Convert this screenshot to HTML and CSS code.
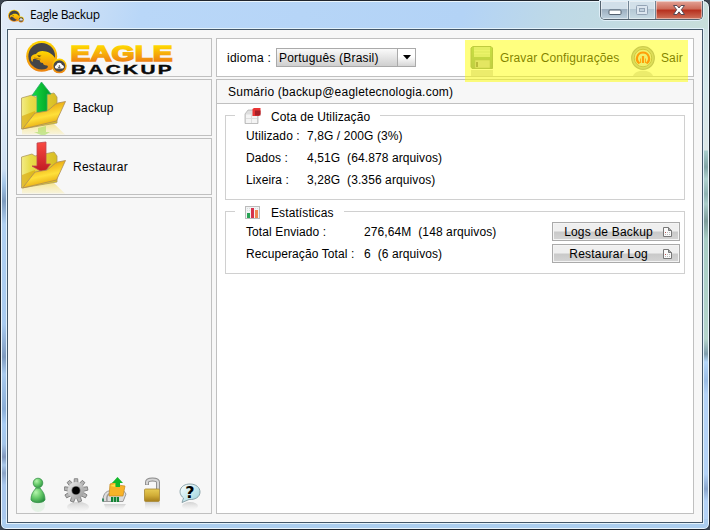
FILE: index.html
```html
<!DOCTYPE html>
<html lang="pt-BR">
<head>
<meta charset="utf-8">
<title>Eagle Backup</title>
<link rel="stylesheet" href="styles.css">
</head>
<body>
<svg class="defs" width="0" height="0" aria-hidden="true">
  <defs>
    <linearGradient id="gold" x1="0" y1="0" x2="0" y2="1"><stop offset="0" stop-color="#ffd800"/><stop offset="1" stop-color="#ee8410"/></linearGradient>
    <linearGradient id="goldText" gradientUnits="userSpaceOnUse" x1="0" y1="6" x2="0" y2="22"><stop offset="0" stop-color="#ffdc00"/><stop offset="1" stop-color="#ef8512"/></linearGradient>
    <linearGradient id="back" x1="0" y1="0" x2="1" y2="0"><stop offset="0" stop-color="#f3eb86"/><stop offset=".25" stop-color="#e8dc49"/><stop offset="1" stop-color="#d9bd22"/></linearGradient>
    <linearGradient id="front" x1="0" y1="0" x2=".35" y2="1"><stop offset="0" stop-color="#dc9a05"/><stop offset=".35" stop-color="#eeb51a"/><stop offset=".65" stop-color="#ffe03a"/><stop offset="1" stop-color="#e5a50c"/></linearGradient>
    <linearGradient id="fade" x1="0" y1="0" x2="0" y2="1"><stop offset="0" stop-color="#f4dc58" stop-opacity=".75"/><stop offset="1" stop-color="#f9edb0" stop-opacity=".4"/></linearGradient>
    <linearGradient id="up" x1="0" y1="0" x2="1" y2="0"><stop offset="0" stop-color="#15dc42"/><stop offset="1" stop-color="#009e26"/></linearGradient>
    <linearGradient id="down" x1="0" y1="0" x2="0" y2="1"><stop offset="0" stop-color="#fa4a42"/><stop offset="1" stop-color="#bd1720"/></linearGradient>
    <radialGradient id="person" cx=".35" cy=".3" r=".8"><stop offset="0" stop-color="#b4f5ac"/><stop offset=".5" stop-color="#66c969"/><stop offset="1" stop-color="#248b3c"/></radialGradient>
    <linearGradient id="shade" x1="0" y1="0" x2="0" y2="1"><stop offset="0" stop-color="#9a9a9a" stop-opacity=".4"/><stop offset="1" stop-color="#ccc" stop-opacity="0"/></linearGradient>
    <linearGradient id="steel" x1="0" y1="0" x2="1" y2="1"><stop offset="0" stop-color="#eee"/><stop offset="1" stop-color="#959595"/></linearGradient>
    <linearGradient id="brass" x1="0" y1="0" x2="0" y2="1"><stop offset="0" stop-color="#e8cc55"/><stop offset=".5" stop-color="#d2ae38"/><stop offset="1" stop-color="#a57d1a"/></linearGradient>
    <linearGradient id="bubble" x1="0" y1="0" x2="1" y2="1"><stop offset="0" stop-color="#fff"/><stop offset=".55" stop-color="#c4e7ed"/><stop offset="1" stop-color="#98cdd6"/></linearGradient>
    <linearGradient id="disk" x1="0" y1="0" x2="0" y2="1"><stop offset="0" stop-color="#8fbf86"/><stop offset="1" stop-color="#819d84"/></linearGradient>
    <symbol id="eagle" viewBox="0 0 41 33">
      <circle cx="15.700" cy="15.700" r="15.500" fill="url(#gold)"/>
      <circle cx="15.700" cy="15.700" r="13.300" fill="#444448"/>
      <path d="M5 18.500 C4.500 15.500 7 14 10 13.500 C12 10.500 16 9.800 20 11 C25 12.500 28 15 31 21 L26 29 C24 30 22 30 20 29 C22 27 22.500 25.500 21 25 C18 25 17 24 17 22.500 C14.500 22.500 13.500 21.500 14 20 C11 19 8 18 7 19 L6.500 21.500 C5.300 20.500 5 19.500 5 18.500Z" fill="url(#gold)"/>
      <path d="M11 14.800 L15.500 15.300 L13 16.500Z" fill="#4a3a14"/>
      <path d="M8 17.500 L14.500 18.700" stroke="#8d6510" stroke-width=".7" fill="none"/>
      <circle cx="33.300" cy="25.500" r="7.400" fill="url(#gold)"/>
      <circle cx="33.300" cy="25.500" r="5.800" fill="#48484b"/>
      <path d="M30 28 C28.300 27.500 28.600 25 30.500 24.600 C31 21.600 35.300 21.500 36 24.500 C38.500 24.800 38.400 28 36.500 28Z" fill="#fff"/>
      <path d="M33.300 24.500 v3 m-1.400-1.300 l1.400 1.500 1.400-1.500" stroke="#555" stroke-width=".9" fill="none"/>
    </symbol>
    <symbol id="page" viewBox="0 0 9 10"><path d="M.5 .5 H5.500 L8.500 3.500 V9.500 H.5Z" fill="#fafafa" stroke="#777"/><path d="M5.500 .5 V3.500 H8.500" fill="#aaa" stroke="#777"/><path d="M2 5.500h1M2 7.500h1M4 5.500h1M4 7.500h1M6 5.500h1M6 7.500h1" stroke="#bbb"/><path d="M2 5.500h1" stroke="#b55"/></symbol>
  </defs>
</svg>
<div class="window">
  <header class="titlebar">
    <svg class="title-icon" width="16" height="14"><use href="#eagle" width="16" height="14"/></svg>
    <span class="title">Eagle Backup</span>
    <div class="controls">
      <span class="ctl min"><svg width="14" height="8"><rect x="1" y="2" width="12" height="4.500" rx="1" fill="#fff" stroke="#53606f"/></svg></span>
      <span class="ctl max"><svg width="14" height="12"><rect x="1.500" y="1.500" width="11" height="9" rx="1" fill="#dce6ef" stroke="#93a3b4"/><rect x="4.500" y="4.500" width="5" height="3" fill="#c2d0dd" stroke="#93a3b4"/></svg></span>
      <span class="ctl close"><svg width="14" height="12"><path d="M1.500 1.500 H5 L7 4 L9 1.500 H12.500 L9.300 5.700 L12.500 10.500 H9 L7 7.800 L5 10.500 H1.500 L4.700 5.700Z" fill="#fff" stroke="#574954"/></svg></span>
    </div>
  </header>
  <main class="client">
    <aside class="sidebar">
      <div class="panel brand">
        <svg width="194" height="37">
          <use href="#eagle" x="9" y="1.500" width="41" height="33"/>
          <text class="eagle-word" x="53.500" y="21.500" textLength="102" lengthAdjust="spacingAndGlyphs">EAGLE</text>
          <text class="backup-word" x="54" y="34.500" textLength="103" lengthAdjust="spacingAndGlyphs">BACKUP</text>
        </svg>
      </div>
      <div class="panel nav">
        <svg width="52" height="55" viewBox="0 0 52 55">
          <path d="M5 49 L35 42 L48 54.500 H5Z" fill="url(#fade)"/><path d="M21 48 l8-2 v6 h4 l-5 3 h-4 l-7-3h4Z" fill="#98d94b" opacity=".5"/>
          <path d="M4.500 49 V18 L15 15 L18 17 L37 13 L40 17 V43Z" fill="url(#back)" stroke="#af9b5e" stroke-width=".8"/><path d="M5 48 V36 L18 31 V46Z" fill="#d9a80c" opacity=".65"/>
          <path d="M24.500 2 L34 14 H30 V34 H20 V15.500 H15Z" fill="url(#up)" stroke="#2ea869" stroke-width=".8"/>
          <path d="M5.500 49 L18 33 L30 31 C35 28 37 24 41 23 L48.500 21.500 L39.500 41 Z" fill="url(#front)" stroke="#ad8c56" stroke-width=".8"/>
        </svg>
        <span>Backup</span>
      </div>
      <div class="panel nav">
        <svg width="52" height="55" viewBox="0 0 52 55">
          <path d="M5 49 L35 42 L48 54.500 H5Z" fill="url(#fade)"/>
          <path d="M4.500 49 V18 L15 15 L18 17 L37 13 L40 17 V43Z" fill="url(#back)" stroke="#af9b5e" stroke-width=".8"/><path d="M5 48 V36 L18 31 V46Z" fill="#d9a80c" opacity=".65"/>
          <path d="M20 4 L29 3 V25 H33.500 L27 34 L15 27 H20Z" fill="url(#down)" stroke="#bc4650" stroke-width=".8"/>
          <path d="M5.500 49 L18 33 L30 31 C35 28 37 24 41 23 L48.500 21.500 L39.500 41 Z" fill="url(#front)" stroke="#ad8c56" stroke-width=".8"/>
        </svg>
        <span class="restore">Restaurar</span>
      </div>
      <div class="panel tools">
        <svg width="18" height="37"><ellipse cx="9" cy="29" rx="7" ry="7" fill="#95dc9c" opacity=".18"/><path d="M2 24 C2 17 5 15 7 12 H11 C13 15 16 17 16 24 C14 27.500 4 27.500 2 24Z" fill="url(#person)" stroke="#39944b" stroke-width=".8"/><circle cx="9" cy="7" r="4.800" fill="url(#person)" stroke="#39944b" stroke-width=".8"/></svg>
        <svg width="26" height="37"><ellipse cx="14" cy="31" rx="11" ry="5" fill="url(#shade)"/>
          <g transform="translate(12 14.500)"><g fill="#b5b5b5" stroke="#777" stroke-width=".8"><path id="tooth" d="M-2 -7 L-1.700 -11.800 H1.700 L2 -7Z"/><use href="#tooth" transform="rotate(40)"/><use href="#tooth" transform="rotate(80)"/><use href="#tooth" transform="rotate(120)"/><use href="#tooth" transform="rotate(160)"/><use href="#tooth" transform="rotate(200)"/><use href="#tooth" transform="rotate(240)"/><use href="#tooth" transform="rotate(280)"/><use href="#tooth" transform="rotate(320)"/></g><circle r="8.400" fill="url(#steel)"/><circle r="4.600" fill="#777"/><circle r="3.800" fill="#000"/></g></svg>
        <svg width="26" height="37"><path d="M3 28 H25 L21 34 H5Z" fill="url(#shade)"/><path d="M2 25.500 C1.500 19 5 14 10 15 L20 11 L25 18 L22 25.500Z" fill="#ddd" stroke="#999"/><path d="M1 22.500 h2 v3 H1Z" fill="#3b8563"/><path d="M6 25 C5 18 9 16 12 19" fill="none" stroke="#999" stroke-width="1.500"/><path d="M9 8 L14 6 L17 9 L24 10 L22 20 H8Z" fill="#f9b327" stroke="#c48a24" stroke-width=".7"/><path d="M9 10 L14 8 L15 11Z" fill="#ffe34d"/><path d="M10 21 H18 V26 H10Z" fill="#158236"/><path d="M12.500 21v5M15.500 21v5" stroke="#93c79d"/><path d="M16.500 1 L22 7 H19 V11 H14.500 V7 H11Z" fill="#13b82b"/></svg>
        <svg width="18" height="37"><path d="M2 26 H17 V34 H2Z" fill="url(#shade)"/><path d="M4 9 V6.500 C4 2.500 15 2.500 15 6.500 V14" fill="none" stroke="#8a8a8a" stroke-width="4"/><path d="M4 8.500 V6.500 C4 2.500 15 2.500 15 6.500 V14" fill="none" stroke="#d5d5d5" stroke-width="2.200"/><rect x="1.500" y="13" width="15" height="12.500" rx="1" fill="url(#brass)" stroke="#a48634" stroke-width=".8"/></svg>
        <svg width="24" height="37"><ellipse cx="12" cy="30" rx="8" ry="4" fill="url(#shade)"/><path d="M12 8 C18 8 22 11.500 22 16 C22 21 17 24 11 23.500 L4 26.500 L5.500 22 C-1 17 2 8 12 8Z" fill="url(#bubble)" stroke="#819ba1" stroke-width=".9"/><text class="question" x="12" y="21.500" text-anchor="middle">?</text></svg>
      </div>
    </aside>
    <section class="content">
      <div class="panel topbar">
        <span class="lang">idioma :</span>
        <div class="select"><span>Português (Brasil)</span><i><svg width="8" height="5"><path d="M0 0H8L4 4.500Z"/></svg></i></div>
        <div class="actions">
          <div class="action save"><svg width="24" height="34"><path d="M1 25H23V31H1Z" fill="#666" opacity=".25"/><path d="M3 1.500H21L22.500 3V23.500H2L1 22V3Z" fill="url(#disk)" stroke="#7f967f"/><path d="M4 2H20V12H4Z" fill="#c9dcc4"/><path d="M4 5.500H20M4 8.500H20" stroke="#d7e6d2"/><path d="M5 15H20V23H5Z" fill="#c9cdc2" stroke="#93a58f" stroke-width=".6"/><path d="M6 17H8V22H6Z" fill="#777"/></svg><span>Gravar Configurações</span></div>
          <div class="action exit"><svg width="26" height="34"><path d="M3 31 C5 24 21 24 23 31Z" fill="#777" opacity=".28"/><circle cx="13" cy="13" r="11.300" fill="#bdbdb4" stroke="#999" stroke-width="1.200"/><circle cx="13" cy="13" r="8.800" fill="#e3ded6" stroke="#99947f"/><path d="M9.500 18.500 C4.500 14.500 7.500 7.500 13 7.500 C18.500 7.500 21.500 14.500 16.500 18.500 M13 11 V18" fill="none" stroke="#ff3c14" stroke-width="2.200"/><path d="M10.500 13.500V18M15.500 13.500V18" stroke="#ff5c20"/></svg><span>Sair</span></div>
        </div>
        <div class="highlight"></div>
      </div>
      <div class="panel summary">
        <h1>Sumário (backup@eagletecnologia.com)</h1>
        <div class="groups">
          <section class="group quota">
            <h2><svg width="18" height="18"><path d="M1 7L4 3H10V7H14V16.500H1Z" fill="#dedede" stroke="#aaa" stroke-width=".7"/><path d="M2 12H7V16H2ZM8 12H13V16H8ZM2 7.500H7V11H2ZM8 9H13V11H8Z" fill="#f4f4f4"/><path d="M8.500 2L10 1H16.500V7L15 9H8.500Z" fill="#e93434"/><path d="M11 3.500H16.500V8.500H11Z" fill="#a72027"/></svg><span>Cota de Utilização</span></h2>
            <dl><dt>Utilizado :</dt><dd>7,8G / 200G (3%)</dd><dt>Dados :</dt><dd>4,51G&nbsp; (64.878 arquivos)</dd><dt>Lixeira :</dt><dd>3,28G&nbsp; (3.356 arquivos)</dd></dl>
          </section>
          <section class="group stats">
            <h2><svg width="18" height="18"><rect x="1.500" y="3.500" width="14" height="12" fill="#f2f4f5" stroke="#bbb"/><path d="M3 7.500H15M3 5.500H15" stroke="#dadede" stroke-dasharray="1 1"/><path d="M3 10H6V15H3Z" fill="#28a354"/><path d="M7 5H10V15H7Z" fill="#d6324b"/><path d="M11 7H14V15H11Z" fill="#ef8750"/></svg><span>Estatísticas</span></h2>
            <dl><dt>Total Enviado :</dt><dd>276,64M&nbsp; (148 arquivos)</dd><dt>Recuperação Total :</dt><dd>6&nbsp; (6 arquivos)</dd></dl>
            <div class="buttons"><button>Logs de Backup<svg width="9" height="10"><use href="#page" width="9" height="10"/></svg></button><button>Restaurar Log<svg width="9" height="10"><use href="#page" width="9" height="10"/></svg></button></div>
          </section>
        </div>
      </div>
    </section>
  </main>
</div>
</body>
</html>
```

FILE: styles.css
```css
* { box-sizing: border-box; }
body { margin: 0; width: 710px; height: 530px; overflow: hidden; background: #3d4651; font: 12px/16px "Liberation Sans", sans-serif; color: #000; letter-spacing: .1px; }
.defs { position: absolute; }
svg { display: block; flex: none; }
.window {
  width: 710px; height: 530px; padding: 0 6px 6px; border: 1px solid #20252d; border-radius: 7px 7px 6px 6px;
  background:
    linear-gradient(#dfe9f6 0, #e2ecf7 70px, #cfe0f3 140px, #a4c6e8 155px, #7d9bbf 172px, #b0d0f2 195px, #a9cbf0 295px, #7f9bc0 328px, #a9cbef 345px, #8aadd6 380px, #a9cdf4 395px, #a5c6ea 415px, #8298bd 428px, #a9c8ea 436px, #8aa3c6 444px, #a9c8ee 456px, #a9c8ee 495px) left 28px / 7px 490px no-repeat,
    linear-gradient(#cde0e2 0, #d5e8ea 60px, #dce6e6 121px, #a9cdcc 122px, #82a5a6 138px, #b0d2cf 150px, #8fb3b2 165px, #aacdc9 175px, #7d9c9a 192px, #a8cdc5 210px, #b5d4cb 310px, #7f9dac 325px, #b4d6f8 333px, #9bbde4 352px, #b4d3f7 365px, #b4d3f7 445px, #8aa6cc 460px, #b4d3f7 472px) right 28px / 7px 490px no-repeat,
    linear-gradient(105deg, #e3ecf8 0, #d2e2f5 8%, #b9d7f8 20%, #b3d3f6 65%, #bed9e7 78%, #c8deda 100%) 0 0 / 100% 29px no-repeat,
    #acceef;
  box-shadow: inset 0 0 0 1px #eaf5fc;
}
.titlebar { height: 28px; display: flex; align-items: flex-start; }
.title-icon { margin: 8px 0 0 1px; }
.title { margin: 5px 0 0 6px; font: 12px/18px "Open Sans", sans-serif; letter-spacing: -.35px; }
.controls { display: flex; margin: 0 0 0 auto; width: 103px; height: 19px; border: 1px solid #53616e; border-top: 0; border-radius: 0 0 5px 5px; overflow: hidden; box-shadow: 0 0 0 1px #e0eff8; }
.ctl { display: flex; align-items: center; justify-content: center; box-shadow: inset 0 0 0 1px rgba(255,255,255,.45); }
.min, .max { width: 28px; border-right: 1px solid #718494; background: linear-gradient(#d1dfe9 0 45%, #9caebf 47%, #bfd2df); }
.max { width: 27px; background: linear-gradient(#d2e0e9 0 45%, #b5c8d5 47%, #c8dbe3); }
.min svg { margin-top: 4px; }
.close { flex: 1; background: linear-gradient(#e3a498, #cd6a58 45%, #b62f1d 50%, #cf725b); }
.client { height: 494px; display: grid; grid-template-columns: 196px 478px; gap: 4px; padding: 8px; border: 1px solid #445769; background: #f7f7f7; box-shadow: 0 0 0 1px #e3f2fb; }
.panel { border: 1px solid #c0c0c0; }
.sidebar { display: grid; grid-template-rows: 39px 57px 57px 317px; gap: 2px; }
.eagle-word { font: bold 21.500px "Liberation Sans", sans-serif; fill: url(#goldText); stroke: url(#goldText); stroke-width: 1.500; letter-spacing: 0; }
.backup-word { font: bold 13px "Liberation Sans", sans-serif; fill: #090909; stroke: #090909; stroke-width: .4; letter-spacing: 1.500px; }
.nav { display: flex; }
.nav span { margin: 20px 0 0 4px; }
.nav .restore { letter-spacing: .25px; }
.tools { display: flex; align-items: flex-end; padding: 0 9px 0 12px; gap: 17px; }
.tools svg:nth-child(3) { margin-left: -6px; }
.tools svg:nth-child(4) { margin-left: -1px; }
.question { font: bold 16px "DejaVu Sans", sans-serif; }
.content { display: grid; grid-template-rows: 39px 435px; gap: 2px; }
.topbar { position: relative; display: flex; background: #fff; }
.lang { margin: 11px 0 0 10px; width: 49px; letter-spacing: .25px; }
.select { display: flex; width: 140px; height: 19px; margin-top: 9px; border: 1px solid #aaa; background: linear-gradient(#fafafa, #cfcfcf); line-height: 18px; letter-spacing: .2px; }
.select span { flex: 1; padding-left: 2px; white-space: nowrap; }
.select i { width: 18px; border-left: 1px solid #aaa; display: flex; align-items: center; justify-content: center; background: linear-gradient(#fff 45%, #d6d6d6); }
.actions { display: flex; margin-left: 54px; }
.action { display: flex; white-space: nowrap; }
.action svg { margin-top: 6px; }
.save span { margin: 11px 0 0 6px; width: 119px; }
.exit { margin-left: 11px; }
.exit span { margin: 11px 0 0 5px; }
.highlight { position: absolute; left: 248px; top: 1px; width: 223px; height: 42px; background: rgba(255,255,0,.5); z-index: 1; }
.summary { background: #fff; }
h1, h2 { margin: 0; font: inherit; }
h1 { height: 24px; padding: 4px 11px; border-bottom: 1px solid #c0c0c0; background: #f7f7f7; letter-spacing: .23px; }
.groups { padding: 11px 8px 0; display: grid; gap: 11px; }
.group { border: 1px solid #d0d0d0; display: grid; padding: 0 4px 0 20px; align-content: start; }
.group h2 { grid-column: 1 / -1; height: 18px; margin: -9px 0 0 -11px; padding: 0 10px 0 9px; display: flex; gap: 9px; width: max-content; background: #fff; line-height: 20px; }
.quota { height: 85px; }
.stats { height: 63px; grid-template-columns: 1fr 128px; }
dl { margin: 2px 0 0; display: grid; grid-auto-rows: 22px; line-height: 18px; grid-template-columns: 61px 1fr; }
.stats dl { grid-template-columns: 118px 1fr; }
dt, dd { margin: 0; white-space: nowrap; }
.buttons { display: grid; grid-auto-rows: 19px; gap: 3px; margin-top: 1px; align-content: start; }
button { display: flex; align-items: center; justify-content: flex-end; padding: 0 7px 0 0; border: 1px solid #aaa; background: linear-gradient(#efefef 0 48%, #c9c9c9 52%, #d4d4d4); box-shadow: inset 0 0 0 1px #f4f4f4; color: #000; font: inherit; letter-spacing: .2px; }
button svg { margin-left: 10px; }
button:last-child svg { margin-left: 15px; }
```
